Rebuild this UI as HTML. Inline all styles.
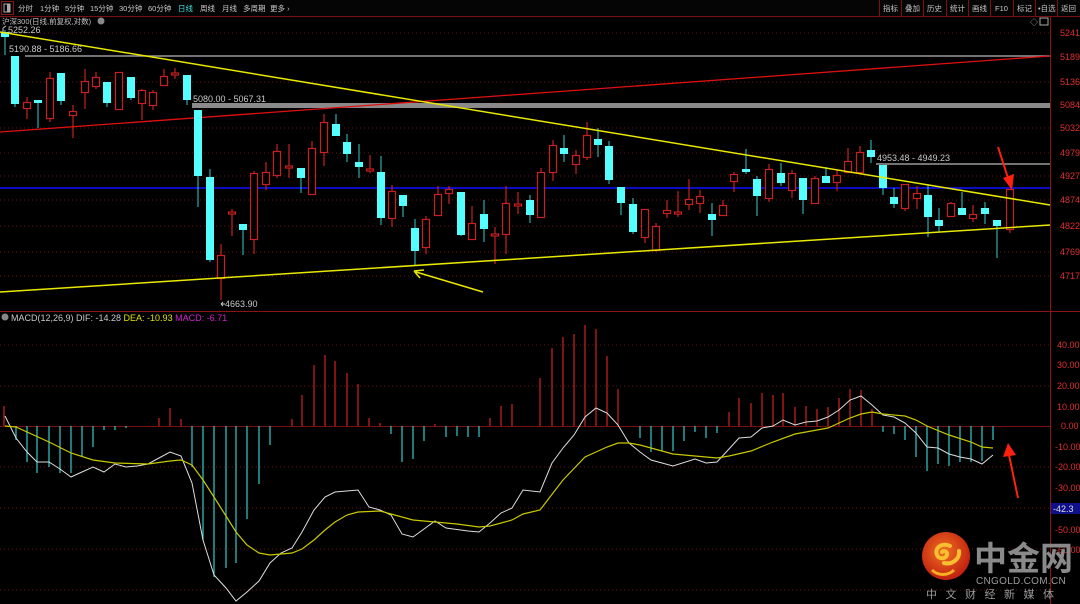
<!DOCTYPE html>
<html><head><meta charset="utf-8"><style>
body{margin:0;background:#000;width:1080px;height:604px;overflow:hidden}
svg{display:block}
text{font-family:"Liberation Sans","Noto Sans CJK SC",sans-serif}
</style></head><body>
<svg width="1080" height="604" viewBox="0 0 1080 604" xmlns="http://www.w3.org/2000/svg">
<rect width="1080" height="604" fill="#000"/>
<!-- toolbar -->
<rect x="0" y="0" width="1080" height="16" fill="#050505"/>
<line x1="0" y1="16.5" x2="1080" y2="16.5" stroke="#7a1010"/>
<rect x="1.5" y="1.5" width="12" height="13" fill="none" stroke="#8a1515"/>
<rect x="4" y="4" width="6" height="8" fill="none" stroke="#aaa"/>
<rect x="7" y="4" width="3" height="8" fill="#aaa"/>
<g font-size="7.5" fill="#c8c8c8">
<text x="18" y="11">分时</text><text x="40" y="11">1分钟</text><text x="65" y="11">5分钟</text><text x="90" y="11">15分钟</text><text x="119" y="11">30分钟</text><text x="148" y="11">60分钟</text><text x="178" y="11" fill="#3ee0e0">日线</text><text x="200" y="11">周线</text><text x="222" y="11">月线</text><text x="243" y="11">多周期</text><text x="270" y="11">更多 ›</text>
<text x="883" y="11">指标</text><text x="905" y="11">叠加</text><text x="927" y="11">历史</text><text x="950" y="11">统计</text><text x="972" y="11">画线</text><text x="995" y="11">F10</text><text x="1017" y="11">标记</text><text x="1038" y="11">•自选</text><text x="1061" y="11">返回</text>
</g>
<g stroke="#7a1010"><line x1="879.5" y1="0" x2="879.5" y2="16"/><line x1="901.5" y1="0" x2="901.5" y2="16"/><line x1="923.5" y1="0" x2="923.5" y2="16"/><line x1="946.5" y1="0" x2="946.5" y2="16"/><line x1="968.5" y1="0" x2="968.5" y2="16"/><line x1="990.5" y1="0" x2="990.5" y2="16"/><line x1="1013.5" y1="0" x2="1013.5" y2="16"/><line x1="1035.5" y1="0" x2="1035.5" y2="16"/><line x1="1057.5" y1="0" x2="1057.5" y2="16"/></g>
<text x="2" y="24" font-size="7.5" fill="#c0c0c0">沪深300(日线,前复权,对数)</text>
<circle cx="101" cy="21" r="3.5" fill="#888"/>
<text x="1030" y="25" font-size="8" fill="#aaa">◇</text><rect x="1040" y="18" width="8" height="7" fill="none" stroke="#aaa"/>
<!-- grid -->
<g stroke="#6a1212" stroke-dasharray="1 3">
<line x1="0" y1="33" x2="1050" y2="33"/><line x1="0" y1="82" x2="1050" y2="82"/><line x1="0" y1="128" x2="1050" y2="128"/><line x1="0" y1="153" x2="1050" y2="153"/><line x1="0" y1="176" x2="1050" y2="176"/><line x1="0" y1="200" x2="1050" y2="200"/><line x1="0" y1="226" x2="1050" y2="226"/><line x1="0" y1="252" x2="1050" y2="252"/><line x1="0" y1="276" x2="1050" y2="276"/>
<line x1="0" y1="345" x2="1050" y2="345"/><line x1="0" y1="386" x2="1050" y2="386"/><line x1="0" y1="467" x2="1050" y2="467"/><line x1="0" y1="508" x2="1050" y2="508"/><line x1="0" y1="549" x2="1050" y2="549"/><line x1="0" y1="590" x2="1050" y2="590"/>
</g>
<line x1="0" y1="311.5" x2="1080" y2="311.5" stroke="#8a1515"/>
<line x1="1050.5" y1="17" x2="1050.5" y2="604" stroke="#8a1515"/>
<line x1="0" y1="426.5" x2="1050" y2="426.5" stroke="#7a1010"/>
<!-- axis labels -->
<g font-size="9" fill="#e03030">
<text x="1060" y="36">5241</text><text x="1060" y="60">5189</text><text x="1060" y="85">5136</text><text x="1060" y="108">5084</text><text x="1060" y="131">5032</text><text x="1060" y="156">4979</text><text x="1060" y="179">4927</text><text x="1060" y="203">4874</text><text x="1060" y="229">4822</text><text x="1060" y="255">4769</text><text x="1060" y="279">4717</text>
<text x="1057" y="348">40.00</text><text x="1057" y="368">30.00</text><text x="1057" y="389">20.00</text><text x="1057" y="410">10.00</text><text x="1061" y="429">0.00</text><text x="1055" y="450">-10.00</text><text x="1055" y="470">-20.00</text><text x="1055" y="491">-30.00</text><text x="1055" y="533">-50.00</text><text x="1055" y="553">-60.00</text>
</g>
<rect x="1051" y="503" width="29" height="11" fill="#10108a"/>
<text x="1053" y="512" font-size="9" fill="#ddd">-42.3</text>
<!-- horizontal marker lines -->
<line x1="25" y1="56" x2="1050" y2="56" stroke="#999" stroke-width="1.5"/>
<rect x="192" y="103" width="858" height="5" fill="#8a8a8a"/>
<line x1="876" y1="164" x2="1050" y2="164" stroke="#999" stroke-width="1.5"/>
<line x1="0" y1="188" x2="1050" y2="188" stroke="#1010ff" stroke-width="1.5"/>
<line x1="0" y1="132" x2="1050" y2="56" stroke="#e01010" stroke-width="1.3"/>
<!-- candles cyan -->
<g stroke="#3cc" fill="#55ffff">
<path d="M5 30V55M15 56V107M38 100V128M61 73V105M107 82V107M131 77V100M187 75V105M198 110V207M210 169V262M243 224V255M301 168V193M336 114V136M347 134V162M359 144V178M381 156V225M403 195V217M415 219V265M461 192V236M484 200V242M530 195V223M564 135V162M598 128V157M609 141V184M621 187V215M633 198V234M712 203V236M746 149V174M757 176V216M781 163V186M803 178V214M826 167V183M871 140V163M883 165V195M894 188V208M928 184V237M939 208V232M962 192V215M985 202V224M997 220V258"/>
<g stroke="none">
<rect x="1" y="32" width="8" height="5"/><rect x="11" y="56" width="8" height="48"/><rect x="34" y="100" width="8" height="3"/><rect x="57" y="73" width="8" height="28"/><rect x="103" y="82" width="8" height="21"/><rect x="127" y="77" width="8" height="21"/><rect x="183" y="75" width="8" height="25"/><rect x="194" y="110" width="8" height="66"/><rect x="206" y="177" width="8" height="83"/><rect x="239" y="224" width="8" height="6"/><rect x="297" y="168" width="8" height="10"/><rect x="332" y="124" width="8" height="12"/><rect x="343" y="142" width="8" height="12"/><rect x="355" y="162" width="8" height="5"/><rect x="377" y="172" width="8" height="46"/><rect x="399" y="195" width="8" height="11"/><rect x="411" y="228" width="8" height="23"/><rect x="457" y="192" width="8" height="43"/><rect x="480" y="214" width="8" height="15"/><rect x="526" y="200" width="8" height="15"/><rect x="560" y="148" width="8" height="6"/><rect x="594" y="139" width="8" height="6"/><rect x="605" y="146" width="8" height="34"/><rect x="617" y="187" width="8" height="16"/><rect x="629" y="204" width="8" height="28"/><rect x="708" y="214" width="8" height="6"/><rect x="742" y="169" width="8" height="3"/><rect x="753" y="179" width="8" height="17"/><rect x="777" y="173" width="8" height="10"/><rect x="799" y="178" width="8" height="22"/><rect x="822" y="176" width="8" height="7"/><rect x="867" y="150" width="8" height="7"/><rect x="879" y="165" width="8" height="23"/><rect x="890" y="197" width="8" height="7"/><rect x="924" y="195" width="8" height="22"/><rect x="935" y="220" width="8" height="6"/><rect x="958" y="208" width="8" height="7"/><rect x="981" y="208" width="8" height="6"/><rect x="993" y="220" width="8" height="6"/>
</g></g>
<!-- candles red -->
<g stroke="#c82020" fill="#000" stroke-width="1.2">
<path d="M27 97V119M50 72V122M73 105V138M85 69V109M96 72V89M119 72V110M142 89V120M153 90V110M164 69V86M175 68V79M221 244V300M232 209V236M254 171V254M266 162V190M277 144V178M289 144V178M312 141V194M324 114V166M370 155V173M392 185V227M426 216V254M438 186V215M449 186V204M472 206V240M495 227V264M506 186V254M518 192V214M541 168V217M553 140V181M576 150V174M587 122V160M645 209V243M656 223V252M667 200V218M678 191V217M689 179V210M700 190V213M723 200V215M734 172V192M769 164V202M792 170V198M815 176V203M837 169V191M848 148V172M860 146V172M905 184V211M917 186V209M951 202V217M973 205V222M1010 189V233"/>
<rect x="23.5" y="102.5" width="7" height="6"/><rect x="46.5" y="78.5" width="7" height="40"/><rect x="69.5" y="111.5" width="7" height="4"/><rect x="81.5" y="81.5" width="7" height="11"/><rect x="92.5" y="77.5" width="7" height="9"/><rect x="115.5" y="72.5" width="7" height="37"/><rect x="138.5" y="90.5" width="7" height="13"/><rect x="149.5" y="92.5" width="7" height="13"/><rect x="160.5" y="76.5" width="7" height="9"/><rect x="171.5" y="73" width="7" height="2"/><rect x="217.5" y="255.5" width="7" height="23"/><rect x="228.5" y="212" width="7" height="2"/><rect x="250.5" y="173.5" width="7" height="66"/><rect x="262.5" y="172.5" width="7" height="12"/><rect x="273.5" y="151.5" width="7" height="24"/><rect x="285.5" y="166" width="7" height="2"/><rect x="308.5" y="148.5" width="7" height="46"/><rect x="320.5" y="122.5" width="7" height="30"/><rect x="366.5" y="169" width="7" height="2"/><rect x="388.5" y="191.5" width="7" height="27"/><rect x="422.5" y="219.5" width="7" height="28"/><rect x="434.5" y="194.5" width="7" height="21"/><rect x="445.5" y="189.5" width="7" height="4"/><rect x="468.5" y="223.5" width="7" height="16"/><rect x="491.5" y="234" width="7" height="2"/><rect x="502.5" y="203.5" width="7" height="31"/><rect x="514.5" y="204" width="7" height="2"/><rect x="537.5" y="172.5" width="7" height="45"/><rect x="549.5" y="145.5" width="7" height="27"/><rect x="572.5" y="155.5" width="7" height="9"/><rect x="583.5" y="135.5" width="7" height="22"/><rect x="641.5" y="209.5" width="7" height="28"/><rect x="652.5" y="226.5" width="7" height="24"/><rect x="663.5" y="210.5" width="7" height="3"/><rect x="674.5" y="212" width="7" height="2"/><rect x="685.5" y="199.5" width="7" height="5"/><rect x="696.5" y="196.5" width="7" height="7"/><rect x="719.5" y="205.5" width="7" height="10"/><rect x="730.5" y="174.5" width="7" height="7"/><rect x="765.5" y="169.5" width="7" height="29"/><rect x="788.5" y="173.5" width="7" height="17"/><rect x="811.5" y="178.5" width="7" height="25"/><rect x="833.5" y="175.5" width="7" height="7"/><rect x="844.5" y="161.5" width="7" height="11"/><rect x="856.5" y="152.5" width="7" height="20"/><rect x="901.5" y="184.5" width="7" height="24"/><rect x="913.5" y="193.5" width="7" height="5"/><rect x="947.5" y="203.5" width="7" height="13"/><rect x="969.5" y="214.5" width="7" height="4"/><rect x="1006.5" y="189.5" width="7" height="40"/>
</g>
<!-- trend lines -->
<line x1="0" y1="32" x2="1050" y2="205" stroke="#e8e800" stroke-width="1.5"/>
<line x1="0" y1="292" x2="1050" y2="225" stroke="#e8e800" stroke-width="1.5"/>
<line x1="483" y1="292" x2="416" y2="272" stroke="#e8e800" stroke-width="1.5"/>
<path d="M414 271L424 270M414 271L420 278" stroke="#e8e800" stroke-width="1.5"/>
<!-- labels -->
<g font-size="9" fill="#c8c8c8">
<text x="8" y="33">5252.26</text><text x="9" y="52">5190.88 - 5186.66</text><text x="193" y="102">5080.00 - 5067.31</text><text x="877" y="161">4953.48 - 4949.23</text><text x="225" y="307">4663.90</text>
</g>
<path d="M3 28L6 26M3 28V32" stroke="#c8c8c8"/>
<path d="M221 304H225M221 304L223 302M221 304L223 306" stroke="#c8c8c8"/>
<!-- red arrows -->
<path d="M998 147L1008 178" stroke="#ff2010" stroke-width="2"/>
<path d="M1003 178L1012 190L1014 174Z" fill="#ff2010"/>
<path d="M1018 498L1009 455" stroke="#ff2010" stroke-width="2"/>
<path d="M1003 457L1008 443L1016 455Z" fill="#ff2010"/>
<!-- MACD title -->
<circle cx="5" cy="317" r="3.5" fill="#888"/>
<text x="11" y="321" font-size="9" fill="#c8c8c8">MACD(12,26,9) DIF: -14.28 <tspan fill="#e0e000">DEA: -10.93</tspan> <tspan fill="#d020d0">MACD: -6.71</tspan></text>
<!-- histogram -->
<path stroke="#d02020" stroke-width="1.2" d="M4 426V406M159 426V418M170 426V408M181 426V419M292 426V419M302 426V395M314 426V365M325 426V355M335 426V361M347 426V373M358 426V384M369 426V418M380 426V423M435 426V424M490 426V418M501 426V406M512 426V404M540 426V378M552 426V348M563 426V337M574 426V334M585 426V325M596 426V329M607 426V356M618 426V389M729 426V412M739 426V398M751 426V403M762 426V393M773 426V395M783 426V393M795 426V407M806 426V406M817 426V409M828 426V407M839 426V398M850 426V389M861 426V390M872 426V409"/>
<path stroke="#3cc" stroke-width="1.2" d="M16 426V440M27 426V462M37 426V473M49 426V467M60 426V473M71 426V473M82 426V457M93 426V447M104 426V430M115 426V430M126 426V428M192 426V467M203 426V540M214 426V577M226 426V568M236 426V563M247 426V519M259 426V484M270 426V445M391 426V434M402 426V462M413 426V459M424 426V441M446 426V437M457 426V436M468 426V437M479 426V437M640 426V438M651 426V452M662 426V451M673 426V451M684 426V441M695 426V432M706 426V438M717 426V433M883 426V432M894 426V434M905 426V440M916 426V457M927 426V471M938 426V464M949 426V466M960 426V462M971 426V462M982 426V461M993 426V440"/>
<polyline fill="none" stroke="#ddd" stroke-width="1" points="5,416 16,438 27,452 37,462 49,462 60,469 71,477 82,472 93,467 104,472 115,464 126,467 137,466 148,464 159,458 170,452 181,456 192,483 203,540 214,575 226,588 236,601 247,592 259,581 270,563 281,553 292,548 302,532 314,510 325,497 335,492 358,490 369,507 380,510 391,515 402,534 413,537 435,521 446,528 468,531 479,532 490,523 501,513 512,508 523,490 540,492 552,463 563,448 574,435 585,417 596,408 607,413 618,425 629,443 640,452 651,460 662,463 673,466 695,459 706,463 717,462 729,449 739,438 751,437 762,428 773,426 783,420 795,425 806,422 817,421 828,417 839,410 850,400 861,396 872,405 883,415 894,417 905,423 916,433 927,447 938,448 949,454 960,457 971,459 982,464 993,455"/>
<polyline fill="none" stroke="#c8c800" stroke-width="1.2" points="5,426 16,427 49,442 71,453 93,460 115,463 148,464 170,461 181,460 192,465 203,480 214,497 226,516 236,532 247,545 259,553 270,555 292,553 302,549 314,540 325,530 335,522 347,515 358,512 380,511 391,514 413,520 435,522 457,524 479,527 490,526 512,520 523,514 540,510 563,480 585,457 607,447 618,443 629,443 640,445 662,451 673,454 695,456 717,458 729,456 751,451 773,442 795,434 817,430 828,428 839,423 850,418 861,414 872,412 883,414 905,416 916,420 927,426 949,435 971,442 982,447 993,448"/>
<!-- logo -->
<defs><radialGradient id="g" cx="45%" cy="40%" r="60%"><stop offset="0" stop-color="#f07020"/><stop offset="1" stop-color="#c02010"/></radialGradient></defs>
<circle cx="946" cy="556" r="24" fill="url(#g)"/>
<path d="M950 546c-8-4-16 2-13 9c2 5 10 4 10-1c0-3-4-4-5-2M944 563c8 2 16-4 15-12" stroke="#f8c030" stroke-width="4" fill="none" stroke-linecap="round"/>
<path d="M932 570c6 6 16 6 22 0" stroke="#f8b020" stroke-width="3" fill="none"/>
<text x="974" y="570" font-size="33" font-weight="bold" fill="#8a8a8a">中金网</text>
<text x="976" y="584" font-size="10" fill="#9a9a9a" letter-spacing="0.3">CNGOLD.COM.CN</text>
<text x="926" y="598" font-size="11" fill="#9a9a9a" letter-spacing="8.5">中文财经新媒体</text>
</svg>
</body></html>
